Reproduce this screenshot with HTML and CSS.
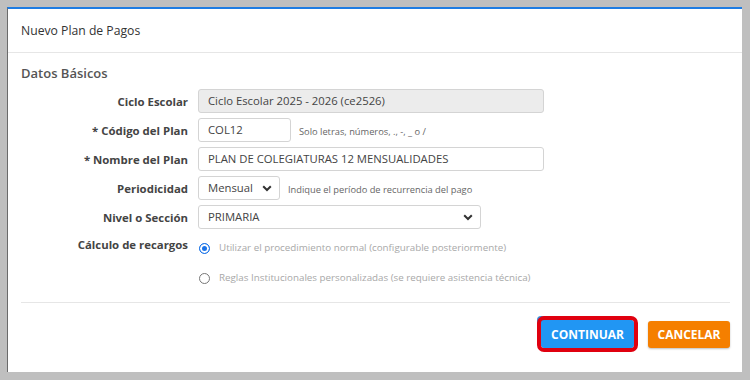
FILE: index.html
```html
<!DOCTYPE html>
<html lang="es">
<head>
<meta charset="utf-8">
<link rel="stylesheet" href="styles.css">
</head>
<body>
<div class="modal">
  <div class="modal-header">Nuevo Plan de Pagos</div>
  <div class="modal-body">
    <div class="section-title">Datos Básicos</div>
    <div class="form">
      <div class="row">
        <label class="lbl">Ciclo Escolar</label>
        <div class="ctl"><div class="input readonly w-wide">Ciclo Escolar 2025 - 2026 (ce2526)</div></div>
      </div>
      <div class="row">
        <label class="lbl">* Código del Plan</label>
        <div class="ctl"><div class="input w-code">COL12</div><span class="hint">Solo letras, números, ., -, _ o /</span></div>
      </div>
      <div class="row">
        <label class="lbl">* Nombre del Plan</label>
        <div class="ctl"><div class="input w-wide">PLAN DE COLEGIATURAS 12 MENSUALIDADES</div></div>
      </div>
      <div class="row">
        <label class="lbl">Periodicidad</label>
        <div class="ctl"><div class="input select w-per">Mensual<svg class="chev" width="10" height="7" viewBox="0 0 10 7"><path d="M1.2 1.2 L5 5 L8.8 1.2" fill="none" stroke="#333" stroke-width="2"/></svg></div><span class="hint">Indique el período de recurrencia del pago</span></div>
      </div>
      <div class="row">
        <label class="lbl">Nivel o Sección</label>
        <div class="ctl"><div class="input select w-niv">PRIMARIA<svg class="chev" width="10" height="7" viewBox="0 0 10 7"><path d="M1.2 1.2 L5 5 L8.8 1.2" fill="none" stroke="#333" stroke-width="2"/></svg></div></div>
      </div>
      <div class="row row-radio">
        <label class="lbl lbl-top">Cálculo de recargos</label>
        <div class="radios">
          <div class="radio"><span class="dot on"></span><span class="rtext">Utilizar el procedimiento normal (configurable posteriormente)</span></div>
          <div class="radio"><span class="dot"></span><span class="rtext">Reglas Institucionales personalizadas (se requiere asistencia técnica)</span></div>
        </div>
      </div>
    </div>
    <div class="divider"></div>
    <div class="footer">
      <button class="btn btn-primary">CONTINUAR</button>
      <button class="btn btn-warn">CANCELAR</button>
    </div>
  </div>
</div>
</body>
</html>
```
FILE: styles.css
```css
html, body {
  margin: 0;
  padding: 0;
}
body {
  background: #bfbfbf;
  width: 750px;
  height: 380px;
  overflow: hidden;
  font-family: "Open Sans", "Noto Sans", sans-serif;
  padding: 7px 0 0 7px;
  box-sizing: border-box;
}
.modal {
  width: 735px;
  height: 365px;
  background: #fff;
  border-top: 2px solid #1e7ce2;
  border-left: 1px solid #6b6b6b;
  box-sizing: border-box;
  display: flex;
  flex-direction: column;
}
.modal-header {
  height: 43px;
  line-height: 43px;
  padding-left: 13px;
  font-size: 12.2px;
  color: #333;
  border-bottom: 1px solid #e6e6e6;
}
.modal-body {
  padding: 10px 12px 0 13px;
  display: flex;
  flex-direction: column;
}
.section-title {
  font-size: 13px;
  color: #555;
  height: 20px;
  line-height: 20px;
  font-weight: 600;
}
.form {
  margin-top: 6px;
  display: flex;
  flex-direction: column;
  gap: 5px;
}
.row {
  display: flex;
  align-items: center;
  gap: 10px;
}
.lbl {
  width: 167px;
  flex: none;
  text-align: right;
  font-weight: 700;
  font-size: 11.4px;
  color: #444;
}
.ctl {
  display: flex;
  align-items: center;
  gap: 8px;
}
.input {
  position: relative;
  height: 24px;
  line-height: 22px;
  box-sizing: border-box;
  border: 1px solid #d4d4d4;
  border-radius: 3px;
  padding: 0 9px;
  font-size: 11.3px;
  color: #444;
  background: #fff;
}
.readonly {
  background: #ececec;
}
.w-wide { width: 346px; }
.w-code { width: 93px; }
.w-per { width: 82px; }
.w-niv { width: 283px; }
.chev {
  position: absolute;
  right: 7px;
  top: 8px;
}
.hint {
  font-size: 9.3px;
  color: #666;
  padding-top: 3px;
}
.row-radio {
  align-items: flex-start;
}
.lbl-top {
  line-height: 16px;
  padding-top: 3px;
}
.radios {
  display: flex;
  flex-direction: column;
}
.radio {
  height: 30px;
  display: flex;
  align-items: flex-start;
  padding-top: 8px;
  box-sizing: border-box;
  gap: 9px;
}
.dot {
  width: 9px;
  height: 9px;
  border-radius: 50%;
  border: 1px solid #777;
  margin-left: 1px;
  margin-top: 1px;
  flex: none;
  box-sizing: content-box;
}
.dot.on {
  border-color: #1a73e8;
  background: #1a73e8;
  box-shadow: inset 0 0 0 2px #fff;
}
.rtext {
  font-size: 9.8px;
  color: #a8a8a8;
  line-height: 12px;
}
.divider {
  margin-top: 8px;
  height: 1px;
  background: #e6e6e6;
  width: 709px;
}
.footer {
  display: flex;
  justify-content: flex-end;
  align-items: center;
  gap: 14px;
  padding: 17px 0 0 0;
  width: 709px;
}
.btn {
  border: none;
  color: #fff;
  font-family: "Open Sans", "Noto Sans", sans-serif;
  font-weight: 700;
  font-size: 12px;
  border-radius: 3px;
  cursor: pointer;
}
.btn-primary {
  background: #2196f3;
  width: 93px;
  height: 28px;
  outline: 4px solid #e0000f;
  outline-offset: 0;
  box-shadow: -3px -3px 0 1px #3d8fdc;
}
.btn-warn {
  background: #f57f00;
  width: 82px;
  height: 27px;
  box-shadow: 0 1px 2px rgba(0,0,0,0.25);
}
```
